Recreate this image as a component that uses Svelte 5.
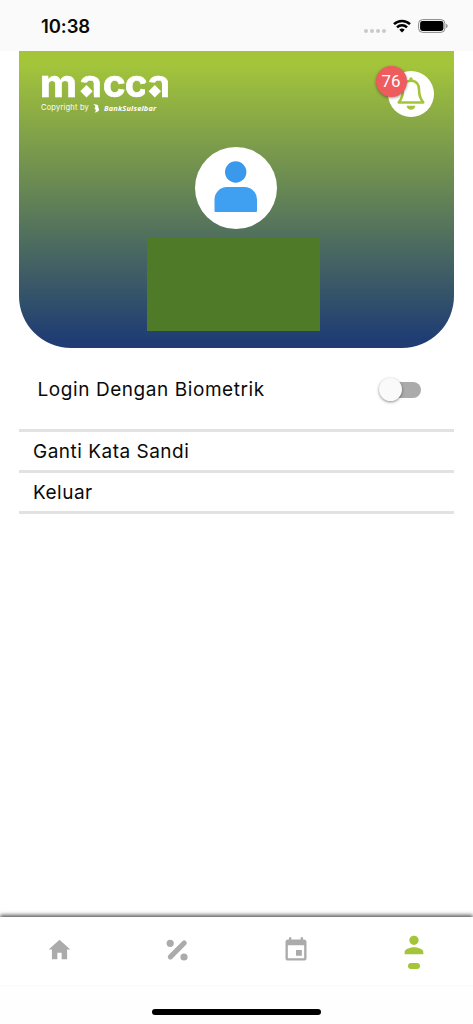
<script lang="ts">
	type Tab = 'home' | 'promo' | 'calendar' | 'profile';

	const tabs: Tab[] = ['home', 'promo', 'calendar', 'profile'];
	const menu = ['Ganti Kata Sandi', 'Keluar'];

	let active: Tab = $state('profile');
	let biometric = $state(false);
	let notifications = $state(76);
</script>

{#snippet tabIcon(name: Tab)}
	{#if name === 'home'}
		<svg width="27" height="26" viewBox="0 0 24 24">
			<path d="M10 20.5v-6h4v6h5v-9h3L12 2.5 2 11.5h3v9z" />
		</svg>
	{:else if name === 'promo'}
		<svg width="26" height="26" viewBox="0 0 26 26">
			<circle cx="6.2" cy="6.3" r="3.6" />
			<circle cx="20" cy="20" r="3.6" />
			<path d="M6.4 19.8 20.200 6" stroke="currentColor" stroke-width="5.2" stroke-linecap="round" />
		</svg>
	{:else if name === 'calendar'}
		<svg width="28" height="28" viewBox="0 0 24 24">
			<path
				d="M17 12h-5v5h5v-5zM16 1v2H8V1H6v2H5c-1.11 0-1.99.9-1.99 2L3 19c0 1.1.89 2 2 2h14c1.1 0 2-.9 2-2V5c0-1.100-.9-2-2-2h-1V1h-2zm3 18H5V8h14v11z"
			/>
		</svg>
	{:else}
		<svg width="28" height="28" viewBox="0 0 24 24">
			<path
				d="M12 12c2.210 0 4-1.790 4-4s-1.790-4-4-4-4 1.790-4 4 1.790 4 4 4zm0 2c-2.670 0-8 1.340-8 4v2h16v-2c0-2.660-5.330-4-8-4z"
			/>
		</svg>
	{/if}
{/snippet}

<div class="screen">
	<div class="status">
		<span class="time">10:38</span>
		<div class="indicators">
			<div class="dots"><i></i><i></i><i></i><i></i></div>
			<svg class="wifi" width="18" height="14" viewBox="0 0 18 14">
				<g fill="none" stroke="#000" stroke-width="2.5">
					<path d="M1 5.200a11.400 11.400 0 0 1 16 0" />
					<path d="M4 8.400a7.100 7.100 0 0 1 10 0" />
				</g>
				<path d="M6.300 10.700a4 4 0 0 1 5.400 0L9 13.600z" />
			</svg>
			<svg width="30" height="14" viewBox="0 0 30 14">
				<rect x=".6" y=".6" width="26.300" height="12.800" rx="4" fill="none" stroke="#888" />
				<rect x="2.100" y="2.100" width="23.300" height="9.800" rx="2.400" />
				<path d="M28.200 4.700q1.500.8 1.500 2.300t-1.500 2.300z" fill="#888" />
			</svg>
		</div>
	</div>

	<header>
		<div class="top">
			<div class="brand">
				<svg class="logo" width="130" height="26" viewBox="0 0 130 26">
					<mask id="bowls" maskUnits="userSpaceOnUse" x="-5" y="-5" width="140" height="36">
						<rect x="-5" y="-5" width="140" height="36" fill="#fff" />
						<path d="M36 9.800h16.700V26H36zM104 9.800h17V26h-17z" fill="#000" />
					</mask>
					<g mask="url(#bowls)">
						<text x="-1.300 38.300 61.700 83.700 106.600" y="24"><tspan textLength="37.500" lengthAdjust="spacingAndGlyphs">m</tspan>acca</text>
					</g>
					<path d="m45.500 12 6.200 6.200-6.200 6.200-6.200-6.200zM113.800 12l6.200 6.200-6.200 6.200-6.200-6.200z" />
				</svg>
				<div class="copyright">
					<span>Copyright by</span>
					<svg width="7" height="9" viewBox="0 0 7 9">
						<path d="M.3.4C3.500.1 6 1.200 5.200 3.700 7.400 5.200 5.500 8.500 1.500 8.600 3.400 7 3.200 5.600 1.300 4.500 3 3.200 2.600 1.500.3.4z" />
					</svg>
					<em>BankSulselbar</em>
				</div>
			</div>
			<button class="bell" aria-label="Notifikasi" onclick={() => (notifications = 0)}>
				<svg width="30" height="35" viewBox="0 0 28 33.5">
					<path
						d="M14 4.600c-5.200 0-7.700 3.600-7.700 8.500 0 6-1.300 9-4 12.200h23.400c-2.700-3.200-4-6.200-4-12.200 0-4.900-2.500-8.500-7.700-8.500z"
						fill="none"
						stroke="currentColor"
						stroke-width="2.500"
						stroke-linejoin="round"
					/>
					<path d="M12.400 4V2.700a1.600 1.600 0 0 1 3.200 0V4zM9.800 28.500h8.400c-.5 5.200-7.900 5.200-8.400 0z" />
				</svg>
				{#if notifications}
					<span class="badge">{notifications}</span>
				{/if}
			</button>
		</div>
		<div class="avatar">
			<svg width="44" height="52" viewBox="0 0 44 52">
				<circle cx="21.700" cy="11" r="10.700" fill="#3a99ea" />
				<path d="M.5 50V38.500a12.500 12.500 0 0 1 12.500-12.500h17.500A12.500 12.500 0 0 1 43 38.500V50q0 1-1 1h-40.500q-1 0-1-1z" fill="#3fa0f2" />
			</svg>
		</div>
		<div class="account"></div>
	</header>

	<main>
		<div class="biometric">
			<span>Login Dengan Biometrik</span>
			<button
				class="switch"
				class:on={biometric}
				role="switch"
				aria-checked={biometric}
				aria-label="Login Dengan Biometrik"
				onclick={() => (biometric = !biometric)}
			></button>
		</div>
		{#each menu as item}
			<div class="item">{item}</div>
		{/each}
	</main>

	<nav>
		{#each tabs as tab}
			<button class="tab" class:active={active === tab} aria-label={tab} onclick={() => (active = tab)}>
				{@render tabIcon(tab)}
				{#if active === tab}
					<span class="pill"></span>
				{/if}
			</button>
		{/each}
	</nav>
	<footer><div class="bar"></div></footer>
</div>

<style>
	:global(body) {
		background: #fff;
	}

	.screen {
		display: flex;
		flex-direction: column;
		width: 473px;
		height: 1024px;
		overflow: hidden;
		font-family: Inter, 'Open Sans', sans-serif;
		color: #0a0a0a;
	}

	button {
		border: 0;
		padding: 0;
		background: none;
		color: inherit;
	}

	.status {
		display: flex;
		flex: none;
		justify-content: space-between;
		align-items: center;
		box-sizing: border-box;
		height: 50.5px;
		padding: 2px 25px 0 41px;
		background: #fafafa;
	}

	.time {
		font-size: 18.5px;
		font-weight: 600;
		letter-spacing: -0.1px;
	}

	.indicators {
		display: flex;
		align-items: center;
		gap: 7px;
	}

	.dots {
		display: flex;
		gap: 2px;
		margin-top: 9px;
	}

	.dots i {
		width: 4px;
		height: 4px;
		border-radius: 2px;
		background: #c9c9c9;
	}

	header {
		display: flex;
		flex-direction: column;
		align-items: center;
		flex: none;
		box-sizing: border-box;
		height: 297px;
		margin: 0 19.5px 0 19px;
		padding-top: 20px;
		border-radius: 0 0 52px 52px;
		background: linear-gradient(#a4c53a 4%, #1f3d73 97%);
	}

	.top {
		display: flex;
		justify-content: space-between;
		box-sizing: border-box;
		width: 100%;
		padding: 0 20px 0 22px;
	}

	.brand {
		padding-top: 2.5px;
	}

	.logo {
		display: block;
		overflow: visible;
		fill: #fff;
	}

	.logo text {
		font-size: 39px;
		font-weight: 700;
		stroke: #fff;
		stroke-width: 0.6px;
	}

	.copyright {
		display: flex;
		align-items: center;
		gap: 4px;
		margin-top: 4px;
		font-size: 7.5px;
		line-height: 10px;
		letter-spacing: 0.19px;
		color: #fff;
		fill: #fff;
	}

	.copyright em {
		font-family: 'Open Sans', sans-serif;
		font-weight: 700;
		font-size: 7.4px;
	}

	.bell {
		position: relative;
		display: flex;
		justify-content: center;
		align-items: center;
		width: 46px;
		height: 46px;
		border-radius: 50%;
		background: #fff;
		color: #a4c53a;
		fill: currentColor;
	}

	.badge {
		position: absolute;
		top: -5px;
		left: -12px;
		width: 31px;
		height: 31px;
		border-radius: 50%;
		background: #ee5c5e;
		box-shadow: 0 1px 3px rgb(0 0 0 / 0.4);
		color: #fff;
		font-family: Roboto, sans-serif;
		font-size: 17px;
		line-height: 31px;
	}

	.avatar {
		display: flex;
		justify-content: center;
		align-items: center;
		width: 82px;
		height: 82px;
		margin-top: 30.5px;
		border-radius: 50%;
		background: #fff;
	}

	.avatar svg {
		margin-top: -3px;
	}

	.account {
		width: 173.5px;
		height: 93.5px;
		margin: 8px 5.5px 0 0;
		background: #4f7b29;
	}

	main {
		flex: 1;
		margin: 0 19px;
		font-size: 19px;
	}

	.biometric {
		display: flex;
		justify-content: space-between;
		align-items: center;
		box-sizing: border-box;
		height: 84.5px;
		padding: 3px 33px 0 18.5px;
		border-bottom: 3px solid #e2e2e2;
		letter-spacing: 0.57px;
	}

	.switch {
		position: relative;
		width: 39px;
		height: 16px;
		border-radius: 8px;
		background: #ababab;
	}

	.switch::after {
		content: '';
		position: absolute;
		top: -4px;
		left: -3px;
		width: 23px;
		height: 23px;
		border-radius: 50%;
		background: #fafafa;
		box-shadow: 0 1px 3px rgb(0 0 0 / 0.45);
	}

	.switch.on::after {
		left: 19px;
	}

	.item {
		box-sizing: border-box;
		height: 41px;
		padding-left: 14px;
		border-bottom: 3px solid #e2e2e2;
		line-height: 39px;
		letter-spacing: 0.5px;
	}

	nav {
		display: flex;
		box-sizing: border-box;
		height: 69px;
		border-bottom: 1px solid #fafafa;
		background: #fff;
		box-shadow: 0 -2px 4px rgb(0 0 0 / 0.65);
	}

	.tab {
		display: flex;
		flex: 1;
		flex-direction: column;
		align-items: center;
		justify-content: center;
		padding-bottom: 2px;
		color: #ababab;
		fill: currentColor;
	}

	.active {
		color: #a4c53a;
	}

	.pill {
		width: 12px;
		height: 6px;
		margin-top: 4px;
		border-radius: 3px;
		background: currentColor;
	}

	footer {
		position: relative;
		display: flex;
		justify-content: center;
		box-sizing: border-box;
		height: 38px;
		padding-top: 22.5px;
		background: #fefefe;
	}

	.bar {
		width: 169px;
		height: 6px;
		border-radius: 3px;
		background: #000;
	}
</style>
